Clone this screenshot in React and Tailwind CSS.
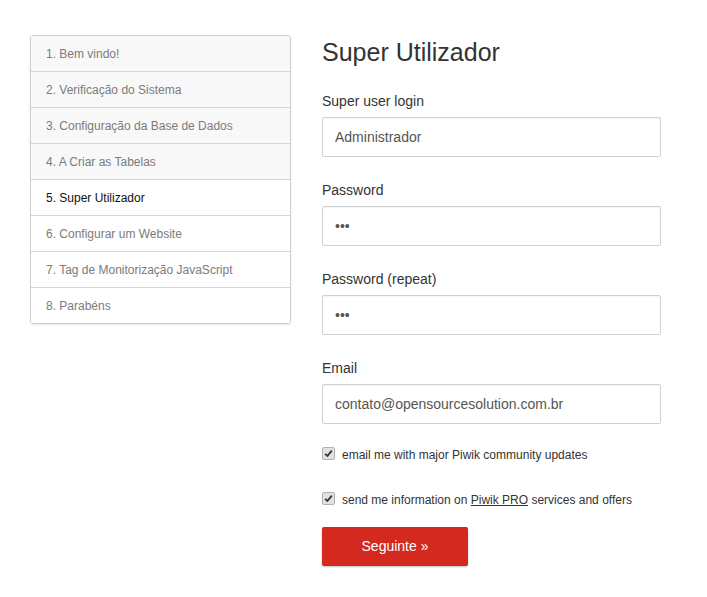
import React from "react";

const steps = [
  "1. Bem vindo!",
  "2. Verificação do Sistema",
  "3. Configuração da Base de Dados",
  "4. A Criar as Tabelas",
  "5. Super Utilizador",
  "6. Configurar um Website",
  "7. Tag de Monitorização JavaScript",
  "8. Parabéns",
];

function Check() {
  return (
    <span className="-mt-[3px] flex h-[13px] w-[13px] shrink-0 items-center justify-center rounded-[2px] border border-[#b0b0b0] bg-[#e2e2e2]">
      <svg width="9" height="9" viewBox="0 0 9 9">
        <path d="M1.2 4.8 L3.4 7 L7.8 1.6" fill="none" stroke="#333" strokeWidth="1.8" />
      </svg>
    </span>
  );
}

function Field({ label, value, mb = "mb-[23px]" }) {
  return (
    <div className={mb}>
      <div className="mb-[6px] text-[14px] leading-[20px] text-[#333]">{label}</div>
      <div className="flex h-[40px] items-center rounded-[2px] border border-[#d0d0d0] bg-white px-[12px] text-[14px] text-[#555] shadow-[inset_0_1px_1px_rgba(0,0,0,0.04)]">
        {value}
      </div>
    </div>
  );
}

export default function App() {
  return (
    <div className="min-h-[597px] bg-white font-['Liberation_Sans',Arial,sans-serif]">
      <div className="flex gap-[31px] pl-[30px] pt-[35px]">
        <div className="w-[261px] self-start overflow-hidden rounded-[3px] border border-[#cfcfcf] shadow-[0_1px_2px_rgba(0,0,0,0.1)]">
          {steps.map((s, i) => (
            <div
              key={s}
              className={`flex items-center px-[15px] text-[12px] ${
                i > 0 ? "h-[36px] border-t border-[#d5d5d5]" : "h-[35px]"
              } ${i < 4 ? "bg-[#f8f8f8] text-[#7b7b7b]" : "bg-white"} ${
                i === 4 ? "text-[#111]" : i > 4 ? "text-[#7b7b7b]" : ""
              }`}
            >
              {s}
            </div>
          ))}
        </div>
        <div className="w-[339px]">
          <h2 className="mb-[25px] mt-[3px] text-[25px] leading-[28px] text-[#333]">Super Utilizador</h2>
          <Field label="Super user login" value="Administrador" />
          <Field label="Password" value={<span className="text-[14px] text-[#555]">•••</span>} />
          <Field label="Password (repeat)" value={<span className="text-[14px] text-[#555]">•••</span>} />
          <Field label="Email" value="contato@opensourcesolution.com.br" mb="mb-[22px]" />
          <div className="flex items-center gap-[7px] text-[12px] text-[#333]">
            <Check />
            <span>email me with major Piwik community updates</span>
          </div>
          <div className="mt-[27px] flex items-center gap-[7px] text-[12px] text-[#333]">
            <Check />
            <span>
              send me information on <span className="underline">Piwik PRO</span> services and offers
            </span>
          </div>
          <button className="mt-[18px] h-[39px] w-[146px] rounded-[2px] bg-[#d4291f] text-[14px] text-white shadow-[0_1px_2px_rgba(0,0,0,0.25)]">
            Seguinte »
          </button>
        </div>
      </div>
    </div>
  );
}
